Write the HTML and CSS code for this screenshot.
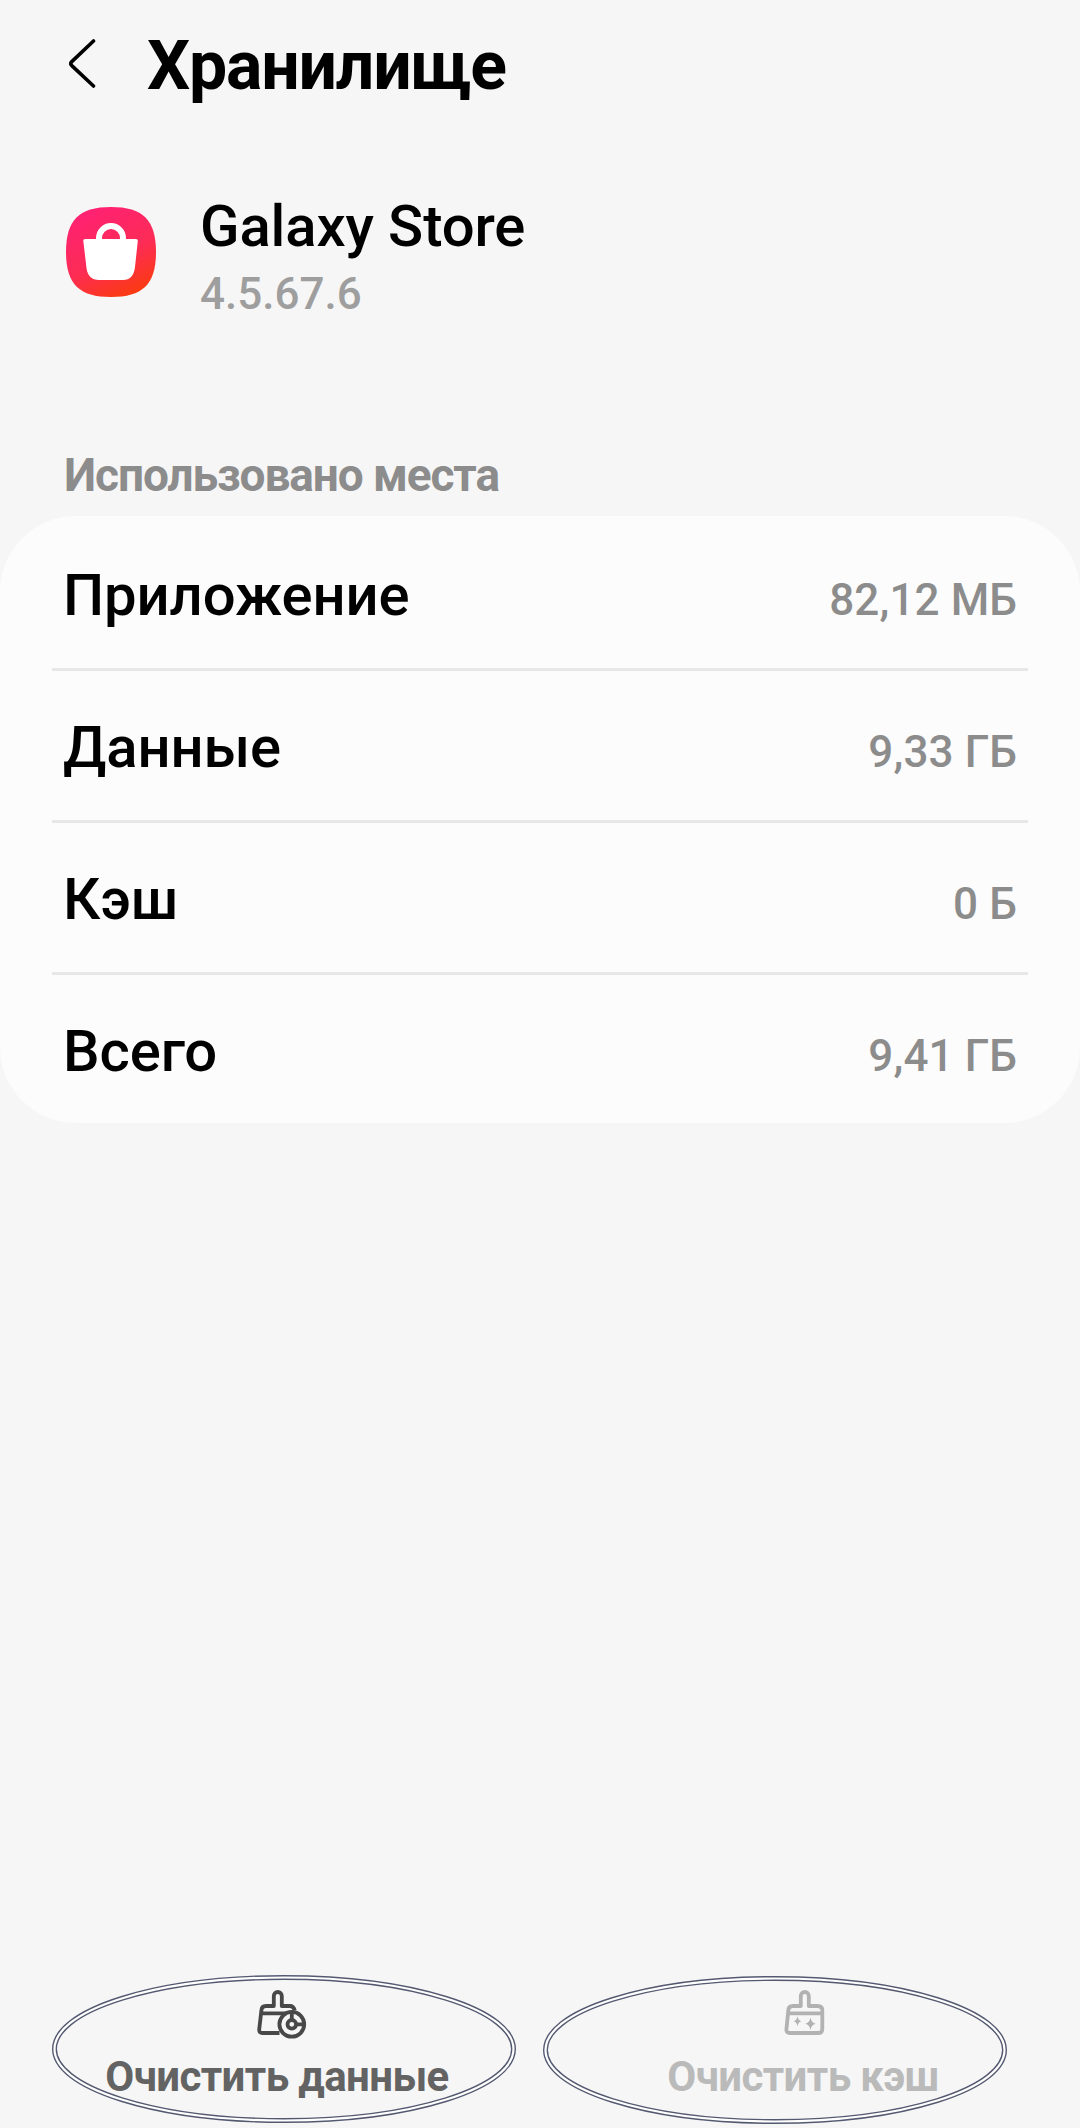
FILE: index.html
```html
<!DOCTYPE html>
<html lang="ru">
<head>
    <meta charset="UTF-8">
    <meta name="viewport" content="width=device-width, initial-scale=1.0">
    <title>Хранилище</title>
    <link rel="stylesheet" href="styles.css">
</head>
<body>
    <header class="header">
        <svg class="back" viewBox="0 0 28 50">
            <path d="M24.5 2 L2.8 22.6 Q0.8 24.6 2.8 26.6 L24.5 47"/>
        </svg>
        <h1>Хранилище</h1>
    </header>

    <main>
        <section class="app">
            <svg class="app-icon" viewBox="0 0 90 90">
                <defs>
                    <linearGradient id="storeGradient" x1="0.3" y1="0" x2="0.75" y2="1">
                        <stop offset="0" stop-color="#ff2173"/>
                        <stop offset="0.55" stop-color="#fc2c55"/>
                        <stop offset="1" stop-color="#fb3b0c"/>
                    </linearGradient>
                </defs>
                <path fill="url(#storeGradient)" d="M45 0 C77 0 90 13 90 45 C90 77 77 90 45 90 C13 90 0 77 0 45 C0 13 13 0 45 0 Z"/>
                <path fill="none" stroke="#fff" stroke-width="6" d="M33 34 V31 A12 12 0 0 1 57 31 V34"/>
                <path fill="#fff" d="M19 32 H70 Q72 32 71.8 34 L69 60 Q67.5 73 57 73 H33 Q22 73 20.5 61 L17.3 34 Q17 32 19 32 Z"/>
            </svg>
            <div>
                <div class="app-name">Galaxy Store</div>
                <div class="app-version">4.5.67.6</div>
            </div>
        </section>

        <h2>Использовано места</h2>
        <ul class="card">
            <li><span class="label">Приложение</span><span class="value">82,12 МБ</span></li>
            <li><span class="label">Данные</span><span class="value">9,33 ГБ</span></li>
            <li><span class="label">Кэш</span><span class="value">0 Б</span></li>
            <li><span class="label">Всего</span><span class="value">9,41 ГБ</span></li>
        </ul>
    </main>

    <footer class="actions">
        <button class="action">
            <svg class="action-icon" viewBox="0 0 52 52">
                <path d="M23.5 43 H6.5 Q3 43 3.2 39.5 L5.4 20.5 Q5.6 16 10 16 H17.8 V6 A4 4 0 0 1 25.8 6 V16 H34 Q37.5 16 38.8 20.5 M5.4 23.3 H30"/>
                <circle cx="35.8" cy="34.3" r="12.4"/>
                <circle cx="35.8" cy="34.3" r="4.3"/>
                <path d="M35.8 22 V30 M40.1 34.3 H48"/>
            </svg>
            <span>Очистить данные</span>
            <svg class="ring ring-left" viewBox="0 0 464 148">
                <ellipse cx="232" cy="74" rx="229.5" ry="71.5"/>
                <ellipse class="gap" cx="232" cy="74" rx="229.5" ry="71.5"/>
            </svg>
        </button>
        <button class="action disabled">
            <svg class="action-icon" viewBox="0 0 52 52">
                <path d="M6.3 20.5 Q6.5 16 11 16 H18.8 V6 A4 4 0 0 1 26.8 6 V16 H35.5 Q40.3 16 40.3 20.5 V39 Q40.3 43 36.5 43 H8 Q4.2 43 4.4 39.5 Z M6.2 23.3 H40"/>
                <path class="spark" d="M15.5 26.2 Q16.3 30.7 19.5 31.3 Q16.3 31.9 15.5 36.4 Q14.7 31.9 11.5 31.3 Q14.7 30.7 15.5 26.2 Z M28.5 27.5 Q29.5 33 33.7 33.8 Q29.5 34.6 28.5 40 Q27.5 34.6 23.3 33.8 Q27.5 33 28.5 27.5 Z"/>
            </svg>
            <span>Очистить кэш</span>
            <svg class="ring ring-right" viewBox="0 0 464 148">
                <ellipse cx="232" cy="74" rx="229.5" ry="71.5"/>
                <ellipse class="gap" cx="232" cy="74" rx="229.5" ry="71.5"/>
            </svg>
        </button>
    </footer>
</body>
</html>
```
FILE: styles.css
```css
* {
    box-sizing: border-box;
}

body {
    margin: 0;
    height: 2128px;
    display: flex;
    flex-direction: column;
    background: #f6f6f6;
    color: #000;
    font-family: Roboto, sans-serif;
    font-weight: 500;
    overflow: hidden;
}

.header {
    display: flex;
    align-items: center;
    height: 132px;
    padding: 0 68px;
}

.back {
    width: 28px;
    height: 50px;
    margin: 0 50px 4px 1px;
    fill: none;
    stroke: #000;
    stroke-width: 3.6;
    stroke-linecap: round;
}

h1 {
    margin: 0;
    font-size: 68px;
    font-weight: 700;
    letter-spacing: -1.2px;
}

.app {
    display: flex;
    align-items: flex-start;
    margin-top: 60px;
    padding-left: 66px;
    line-height: 68px;
}

.app-icon {
    width: 90px;
    height: 90px;
    margin: 15px 44px 0 0;
}

.app-name {
    font-size: 58px;
    letter-spacing: -0.1px;
}

.app-version {
    font-size: 44px;
    color: #9e9e9e;
}

h2 {
    margin: 117px 0 11px 64px;
    font-size: 46px;
    font-weight: 700;
    line-height: 60px;
    letter-spacing: -1.1px;
    color: #8c8c8c;
}

.card {
    margin: 0;
    height: 607px;
    padding: 3px 52px 0;
    list-style: none;
    background: #fcfcfc;
    border-radius: 76px;
}

.card li {
    display: flex;
    justify-content: space-between;
    height: 152px;
    padding: 40px 11px 0;
    border-bottom: 3px solid #e7e7e7;
}

.card li:last-child {
    border-bottom: none;
}

.label {
    font-size: 58px;
    line-height: 72px;
    letter-spacing: -0.1px;
}

.value {
    font-size: 44px;
    line-height: 82px;
    letter-spacing: 0.1px;
    color: #8c8c8c;
}

.actions {
    display: grid;
    grid-template-columns: 526px 526px;
    height: 154px;
    margin-top: auto;
    padding-left: 14px;
}

.action {
    position: relative;
    display: flex;
    flex-direction: column;
    align-items: center;
    padding: 16px 0 0;
    border: none;
    background: none;
    font: 700 42px/50px Roboto, sans-serif;
    letter-spacing: -0.6px;
    color: #636363;
}

.action-icon {
    width: 52px;
    height: 52px;
    margin: 0 0 10px 9px;
    fill: none;
    stroke: #484848;
    stroke-width: 3.8;
    stroke-linejoin: round;
}

.disabled {
    color: #bababa;
}

.disabled .action-icon {
    stroke: #b2b2b2;
}

.disabled .spark {
    fill: #b2b2b2;
    stroke: none;
}

/* ovals drawn around both buttons */
.ring {
    position: absolute;
    width: 464px;
    height: 148px;
    fill: none;
    stroke: #535970;
    stroke-width: 5;
}

.ring .gap {
    stroke: #fff;
    stroke-width: 2.2;
}

.ring-left {
    top: 1px;
    left: 38px;
}

.ring-right {
    top: 2px;
    left: 3px;
}
```
